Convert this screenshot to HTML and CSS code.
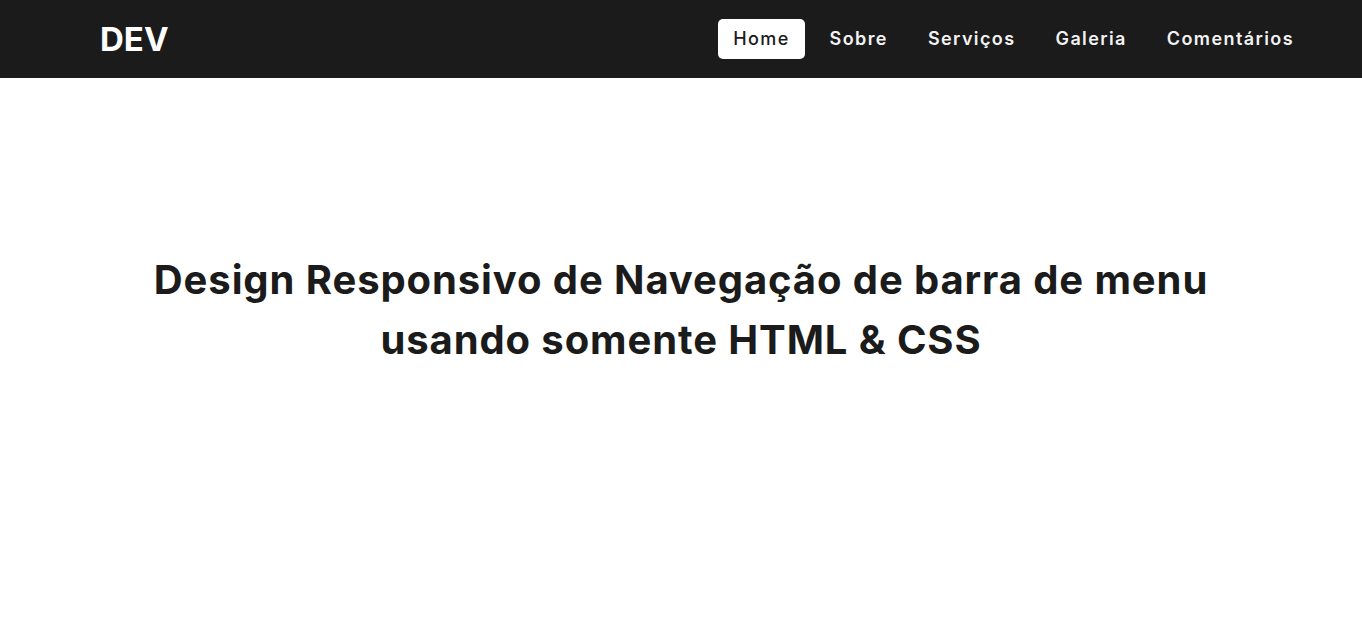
FILE: index.html
```html
<!DOCTYPE html>
<html lang="pt-BR">
<head>
<meta charset="utf-8">
<title>DEV</title>
<link rel="stylesheet" href="styles.css">
</head>
<body>
<nav class="navbar">
  <div class="logo">DEV</div>
  <ul class="menu">
    <li><a class="menu-link active" href="#">Home</a></li>
    <li><a class="menu-link" href="#">Sobre</a></li>
    <li><a class="menu-link" href="#">Serviços</a></li>
    <li><a class="menu-link" href="#">Galeria</a></li>
    <li><a class="menu-link" href="#">Comentários</a></li>
  </ul>
</nav>
<main class="content">
  <h1 class="title">Design Responsivo de Navegação de barra de menu<br>usando somente HTML &amp; CSS</h1>
</main>
</body>
</html>
```

FILE: styles.css
```css
* {
  margin: 0;
  padding: 0;
  box-sizing: border-box;
}

body {
  font-family: Inter, "Open Sans", sans-serif;
  background: #ffffff;
  color: #1b1b1b;
}

.navbar {
  position: fixed;
  top: 0;
  left: 0;
  right: 0;
  height: 78px;
  background: #1b1b1b;
  display: flex;
  align-items: center;
  justify-content: space-between;
  padding: 0 48px 0 100px;
}

.logo {
  color: #ffffff;
  font-size: 33px;
  font-weight: 700;
  letter-spacing: 0;
}

.menu {
  list-style: none;
  display: flex;
  align-items: center;
}

.menu li {
  margin: 0 5px;
}

.menu-link {
  display: block;
  height: 40px;
  line-height: 40px;
  padding: 0 15px;
  border-radius: 5px;
  color: #f2f2f2;
  text-decoration: none;
  font-size: 18px;
  font-weight: 600;
  letter-spacing: 1.4px;
}

.menu-link.active {
  background: #ffffff;
  color: #1b1b1b;
  font-weight: 500;
}

.content {
  min-height: 100vh;
  display: flex;
  align-items: center;
  justify-content: center;
  text-align: center;
}

.title {
  font-size: 40px;
  font-weight: 700;
  line-height: 60px;
  letter-spacing: 0.9px;
}
```
